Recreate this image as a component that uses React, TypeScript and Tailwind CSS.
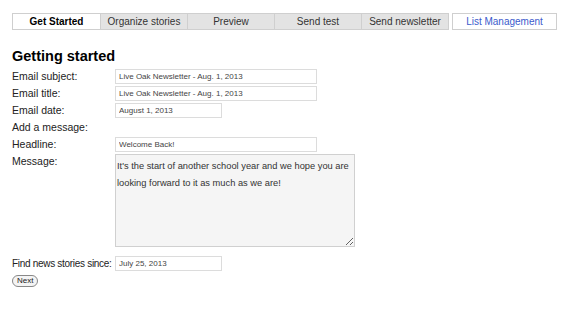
import { useState } from 'react';

const TABS = ['Get Started', 'Organize stories', 'Preview', 'Send test', 'Send newsletter'];

function Field({ label, children }: { label: string; children?: React.ReactNode }) {
  return (
    <>
      <label className="h-[15px] leading-[15px] whitespace-nowrap">{label}</label>
      <div>{children}</div>
    </>
  );
}

const inputCls =
  'block h-[15px] border border-[#dcdcdc] px-[3px] text-[8px] text-[#444] outline-none bg-white';

export default function App() {
  const [message, setMessage] = useState(
    "It's the start of another school year and we hope you are looking forward to it as much as we are!"
  );

  return (
    <div className="w-[568px] h-[320px] bg-white text-[#222] font-['Liberation_Sans',Arial,sans-serif] text-[10.5px]">
      {/* Tabs */}
      <div className="flex items-start pt-[13px] pl-[12px]">
        <div className="flex border border-[#cfcfcf] bg-[#e3e3e3] text-[10px]">
          {TABS.map((t, i) => (
            <div
              key={t}
              className={
                i === 0
                  ? 'w-[87px] h-[15px] leading-[15px] text-center bg-white font-bold text-black'
                  : 'w-[87px] h-[15px] leading-[15px] text-center border-l border-[#cfcfcf] text-[#333]'
              }
            >
              {t}
            </div>
          ))}
        </div>
        <div className="ml-[3px] w-[105px] h-[17px] leading-[15px] text-center border border-[#cfcfcf] text-[10px] text-[#3b5bcc]">
          List Management
        </div>
      </div>

      {/* Form */}
      <div className="pl-[12px] pt-[17px]">
        <h1 className="text-[14.5px] font-bold leading-[18px] text-black">Getting started</h1>
        <div className="grid grid-cols-[103px_auto] gap-y-[2px] mt-[4px]">
          <Field label="Email subject:">
            <input className={inputCls + ' w-[202px]'} defaultValue="Live Oak Newsletter - Aug. 1, 2013" />
          </Field>
          <Field label="Email title:">
            <input className={inputCls + ' w-[202px]'} defaultValue="Live Oak Newsletter - Aug. 1, 2013" />
          </Field>
          <Field label="Email date:">
            <input className={inputCls + ' w-[107px]'} defaultValue="August 1, 2013" />
          </Field>
          <div className="col-span-2 h-[15px] leading-[15px]">Add a message:</div>
          <Field label="Headline:">
            <input className={inputCls + ' w-[202px]'} defaultValue="Welcome Back!" />
          </Field>
          <Field label="Message:">
            <textarea
              className="block w-[240px] h-[93px] border border-[#d0d0d0] bg-[#f5f5f5] px-[1px] pt-[3px] text-[9.3px] leading-[17px] text-[#333] outline-none resize"
              value={message}
              onChange={(e) => setMessage(e.target.value)}
            />
          </Field>
        </div>
        <div className="flex items-center mt-[9px]">
          <span className="w-[103px] shrink-0 whitespace-nowrap text-[10px] tracking-[-0.3px]">Find news stories since:</span>
          <input className={inputCls + ' w-[107px]'} defaultValue="July 25, 2013" />
        </div>
        <button className="block mt-[4px] h-[12px] px-[4px] rounded-full border border-[#888] bg-[#f4f4f4] text-[8px] leading-[10px] text-[#222]">
          Next
        </button>
      </div>
    </div>
  );
}
